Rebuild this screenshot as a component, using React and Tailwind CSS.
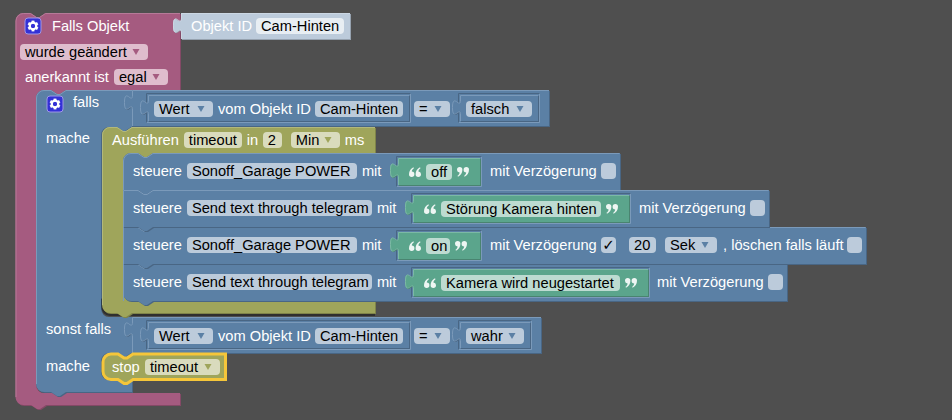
import React from 'react';

const PINK = { fill: '#a55b80', dark: '#844966', light: '#b67a98' };
const BLUE = { fill: '#5b80a5', dark: '#496684', light: '#7b9aba' };
const OLIVE = { fill: '#9fa55b', dark: '#7f8449', light: '#b3b87a' };
const GREEN = { fill: '#5ba58c', dark: '#498470', light: '#7cb9a5' };
const ICE = { fill: '#bccbdb', dark: '#96a2af', light: '#cbd7e3' };

const NOTCH = 'l6,4 3,0 6,-4';
const NOTCH_BACK = 'l-6,4 -3,0 -6,-4';
const TAB = 'c0,-10 -8,8 -8,-7.5 s8,2.5 8,-7.5';

// same three layers as a blockly block: dark copy shifted by 1px, the fill, and a light edge
const Shape = ({ d, light, c }) => (
  <g>
    <path d={d} fill={c.dark} transform="translate(1,1)" />
    <path d={d} fill={c.fill} />
    {light && <path d={light} fill="none" stroke={c.light} strokeWidth="1" />}
  </g>
);

const Value = ({ x, y, r, b, c, inset }) => (
  <g>
    {inset && (
      <>
        <path d={`M${x - 1.5},${b + 1.5} H${r + 1.5} V${y - 1.5}`} fill="none" stroke={inset.light} />
        <path d={`M${x - 1.5},${b + 1.5} V${y - 1.5} H${r + 1.5}`} fill="none" stroke={inset.dark} />
      </>
    )}
    <Shape
      c={c}
      d={`M${x},${y} H${r} V${b} H${x} V${y + 20} ${TAB} Z`}
      light={`M${x + 0.5},${b} V${y + 20} ${TAB} V${y + 0.5} H${r}`}
    />
  </g>
);

const Statement = ({ x, y, r, b, c, roundTop, roundBottom }) => {
  const top = roundTop ? `M${x},${y + 8} a8,8 0 0 1 8,-8` : `M${x},${y}`;
  const bottom = roundBottom ? `H${x + 8} a8,8 0 0 1 -8,-8` : `H${x}`;
  return (
    <Shape
      c={c}
      d={`${top} H${x + 15} ${NOTCH} H${r} V${b} H${x + 30} ${NOTCH_BACK} ${bottom} Z`}
      light={`M${x + 0.5},${b} V${y + 8} ${roundTop ? 'a7.5,7.5 0 0 1 7.5,-7.5' : `V${y + 0.5}`} H${x + 15} ${NOTCH} H${r - 0.5}`}
    />
  );
};

const Gear = ({ className }) => (
  <svg className={`absolute ${className}`} width="18" height="18" viewBox="0 0 18 18">
    <rect x="1" y="1" width="16" height="16" rx="3" fill="#3431d6" stroke="#9d97e6" strokeWidth="1" />
    {[0, 60, 120, 180, 240, 300].map((a) => (
      <rect key={a} x="7.6" y="3.6" width="2.8" height="3" fill="#fff" transform={`rotate(${a} 9 9)`} />
    ))}
    <circle cx="9" cy="9" r="3.3" fill="none" stroke="#fff" strokeWidth="2.2" />
  </svg>
);

const Tri = ({ className }) => (
  <svg className={`ml-auto mr-[8px] shrink-0 ${className}`} width="8" height="6" viewBox="0 0 8 6">
    <path d="M0.5 0 H7.5 L4 6 Z" fill="currentColor" />
  </svg>
);

const Row = ({ className, children }) => (
  <div className={`absolute flex h-4 items-center gap-[5px] whitespace-nowrap text-white ${className}`}>{children}</div>
);

const Pill = ({ tone = 'bg-[#bccbdb]', w = '', children }) => (
  <span className={`flex h-4 items-center rounded-[4px] px-[5px] leading-none text-black ${tone} ${w}`}>{children}</span>
);

const Drop = ({ tone = 'bg-[#bccbdb]', tri = 'text-[#5b80a5]', w = '', children }) => (
  <span className={`flex h-4 items-center gap-[5px] rounded-[4px] pl-[5px] leading-none text-black ${tone} ${w}`}>
    {children}
    <Tri className={tri} />
  </span>
);

const Check = ({ on }) => (
  <span className="flex h-4 w-[15px] items-center justify-center rounded-[4px] bg-[#bccbdb] font-['DejaVu_Sans',sans-serif] text-[15px] leading-none text-black">
    {on ? '✓' : ''}
  </span>
);

const Quote = ({ open }) => (
  <svg width="12" height="10" viewBox="0 0 12 10" className={open ? 'rotate-180' : ''}>
    {[0, 6.6].map((dx) => (
      <path
        key={dx}
        transform={`translate(${dx},0)`}
        d="M0 2.7a2.7 2.7 0 1 1 5.4 0c0 3-1.8 5.8-4.4 7l-.5-.9c1.3-.8 2-1.9 2.1-3.3A2.7 2.7 0 0 1 0 2.7z"
        fill="#eef6f3"
      />
    ))}
  </svg>
);

const Steuere = ({ top, name, w }) => (
  <Row className={top}>
    <span>steuere</span>
    <Pill w={w}>{name}</Pill>
    <span>mit</span>
  </Row>
);

const Str = ({ left, top, w, text }) => (
  <Row className={`${left} ${top}`}>
    <Quote open />
    <Pill tone="bg-[#bddbd1]" w={w}>{text}</Pill>
    <Quote />
  </Row>
);

const Compare = ({ top, val, valW }) => (
  <>
    <Row className={`left-[154px] ${top}`}>
      <Drop w="w-[59px]">Wert</Drop>
      <span className="w-[92px]">vom Objekt ID</span>
      <Pill w="w-[88px]">Cam-Hinten</Pill>
    </Row>
    <Row className={`left-[414px] ${top}`}>
      <Drop w="w-[36px]">=</Drop>
    </Row>
    <Row className={`left-[466px] ${top}`}>
      <Drop w={valW}>{val}</Drop>
    </Row>
  </>
);

const App = () => (
  <div className="relative h-[420px] w-[952px] overflow-hidden bg-[#4f4f4f] font-['Liberation_Sans',sans-serif] text-[14.67px]">
    <svg className="absolute inset-0" width="952" height="420">
      {/* Falls Objekt */}
      <Shape
        c={PINK}
        d={`M15.5,21 a8,8 0 0 1 8,-8 H30.5 ${NOTCH} H180 V90 H66 ${NOTCH_BACK} H44 a8,8 0 0 0 -8,8 V385 a8,8 0 0 0 8,8 H180 V405 H46 ${NOTCH_BACK} H23.5 a8,8 0 0 1 -8,-8 Z`}
        light={`M16,397 V21 a7.5,7.5 0 0 1 7.5,-7.5 H30.5 ${NOTCH} H180`}
      />
      <Value x={181} y={13} r={350} b={39} c={ICE} />

      {/* falls / sonst falls */}
      <Shape
        c={BLUE}
        d={`M36,98 a8,8 0 0 1 8,-8 H51 ${NOTCH} H132 V127 H131 ${NOTCH_BACK} H109 a8,8 0 0 0 -8,8 V309 a8,8 0 0 0 8,8 H132 V353 H131 ${NOTCH_BACK} H109 a8,8 0 0 0 -8,8 V372 a8,8 0 0 0 8,8 H132 V392 H66 ${NOTCH_BACK} H44 a8,8 0 0 1 -8,-8 Z`}
        light={`M36.5,384 V98 a7.5,7.5 0 0 1 7.5,-7.5 H51 ${NOTCH} H132`}
      />
      <Value x={132} y={90} r={549} b={126} c={BLUE} />
      <Value x={148} y={95} r={409} b={121} c={BLUE} inset={BLUE} />
      <Value x={460} y={95} r={538} b={121} c={BLUE} inset={BLUE} />

      {/* Ausführen */}
      <path
        d="M101,298 V307 a9,9 0 0 0 9,9 H375 V310 H110 Z"
        fill="#000"
        fillOpacity="0.4"
      />
      <Shape
        c={OLIVE}
        d={`M102,135 a8,8 0 0 1 8,-8 H117 ${NOTCH} H375 V153 H153 ${NOTCH_BACK} H131 a8,8 0 0 0 -8,8 V293 a8,8 0 0 0 8,8 H375 V313 H132 ${NOTCH_BACK} H110 a8,8 0 0 1 -8,-8 Z`}
        light={`M102.5,305 V135 a7.5,7.5 0 0 1 7.5,-7.5 H117 ${NOTCH} H375`}
      />
      <Statement x={123} y={153} r={620} b={190} c={BLUE} roundTop />
      <Statement x={123} y={264} r={787} b={301} c={BLUE} roundBottom />
      <Statement x={123} y={227} r={866} b={264} c={BLUE} />
      <Statement x={123} y={190} r={769} b={227} c={BLUE} />
      <Value x={398} y={158} r={480} b={185} c={GREEN} inset={BLUE} />
      <Value x={413} y={195} r={629} b={222} c={GREEN} inset={BLUE} />
      <Value x={398} y={232} r={480} b={259} c={GREEN} inset={BLUE} />
      <Value x={413} y={269} r={648} b={296} c={GREEN} inset={BLUE} />

      {/* sonst falls */}
      <Value x={132} y={317} r={541} b={353} c={BLUE} />
      <Value x={148} y={322} r={409} b={348} c={BLUE} inset={BLUE} />
      <Value x={460} y={322} r={530} b={348} c={BLUE} inset={BLUE} />

      {/* stop, selected */}
      <path
        d={`M103,362 a8,8 0 0 1 8,-8 H118 ${NOTCH} H225.5 V379.5 H133 ${NOTCH_BACK} H111 a8,8 0 0 1 -8,-8 Z`}
        fill={OLIVE.fill}
        stroke="#f5c63a"
        strokeWidth="3"
      />
    </svg>

    <Gear className="left-[24px] top-[17px]" />
    <Row className="left-[52px] top-[18px]">Falls Objekt</Row>
    <Row className="left-[191px] top-[18px]">
      <span className="w-[60px]">Objekt ID</span>
      <Pill tone="bg-[#e8eef3]" w="w-[88px]">Cam-Hinten</Pill>
    </Row>
    <Row className="left-[20px] top-[44px]">
      <Drop tone="bg-[#dfbdcd]" tri="text-[#a55b80]" w="w-[128px]">wurde geändert</Drop>
    </Row>
    <Row className="left-[25px] top-[69px]">
      <span>anerkannt ist</span>
      <Drop tone="bg-[#dfbdcd]" tri="text-[#a55b80]" w="w-[54px]">egal</Drop>
    </Row>

    <Gear className="left-[46px] top-[95px]" />
    <Row className="left-[73px] top-[94px]">falls</Row>
    <Compare top="top-[101px]" val="falsch" valW="w-[66px]" />
    <Row className="left-[46px] top-[130px]">mache</Row>

    <Row className="left-[112px] top-[132px]">
      <span>Ausführen</span>
      <Pill tone="bg-[#d9dbbd]" w="w-[58px]">timeout</Pill>
      <span className="w-[11px]">in</span>
      <Pill tone="bg-[#d9dbbd]" w="w-[19px]">2</Pill>
      <span className="ml-[-1px]" />
      <Drop tone="bg-[#d9dbbd]" tri="text-[#9fa55b]" w="w-[49px]">Min</Drop>
      <span>ms</span>
    </Row>

    <Steuere top="left-[133px] top-[163px]" name="Sonoff_Garage POWER" w="w-[170px]" />
    <Str left="left-[409px]" top="top-[164px]" w="w-[26px]" text="off" />
    <Row className="left-[490px] top-[163px]">
      <span className="w-[106px]">mit Verzögerung</span>
      <Check />
    </Row>

    <Steuere top="left-[133px] top-[200px]" name="Send text through telegram" w="w-[185px]" />
    <Str left="left-[424px]" top="top-[201px]" w="w-[160px]" text="Störung Kamera hinten" />
    <Row className="left-[639px] top-[200px]">
      <span className="w-[106px]">mit Verzögerung</span>
      <Check />
    </Row>

    <Steuere top="left-[133px] top-[237px]" name="Sonoff_Garage POWER" w="w-[170px]" />
    <Str left="left-[409px]" top="top-[238px]" w="w-[24px]" text="on" />
    <Row className="left-[490px] top-[237px]">
      <span className="w-[106px]">mit Verzögerung</span>
      <Check on />
    </Row>
    <Row className="left-[629px] top-[237px]">
      <Pill w="w-[27px]">20</Pill>
      <span className="ml-[-1px]" />
      <Drop w="w-[52px]">Sek</Drop>
      <span className="ml-px w-[119px]">, löschen falls läuft</span>
      <Check />
    </Row>

    <Steuere top="left-[133px] top-[274px]" name="Send text through telegram" w="w-[185px]" />
    <Str left="left-[424px]" top="top-[275px]" w="w-[179px]" text="Kamera wird neugestartet" />
    <Row className="left-[657px] top-[274px]">
      <span className="w-[106px]">mit Verzögerung</span>
      <Check />
    </Row>

    <Row className="left-[46px] top-[321px]">sonst falls</Row>
    <Compare top="top-[328px]" val="wahr" valW="w-[58px]" />
    <Row className="left-[46px] top-[358px]">mache</Row>

    <Row className="left-[112px] top-[359px]">
      <span className="w-[28px]">stop</span>
      <Drop tone="bg-[#d9dbbd]" tri="text-[#9fa55b]" w="w-[75px]">timeout</Drop>
    </Row>
  </div>
);

export default App;
